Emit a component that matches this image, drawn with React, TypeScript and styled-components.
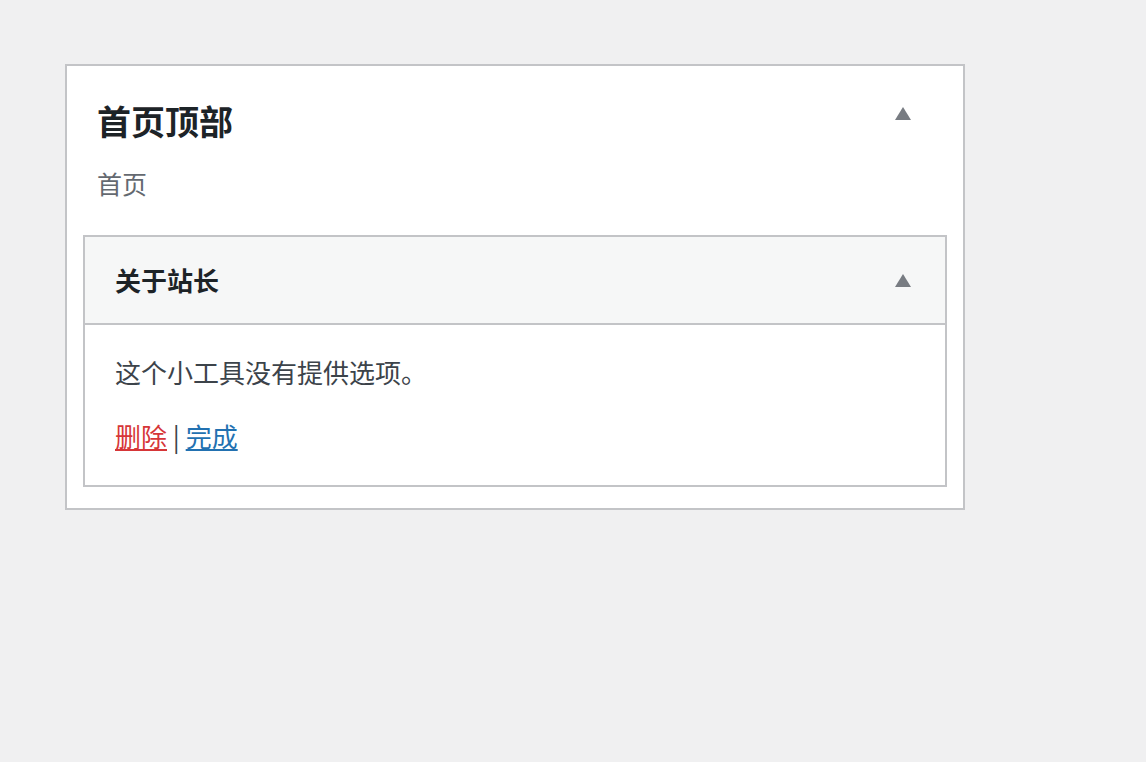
import React, { FC } from 'react';
import styled, { createGlobalStyle } from 'styled-components';

const GlobalStyle = createGlobalStyle`
  body {
    margin: 0;
    background: #f0f0f1;
    font-family: "Noto Sans CJK SC", "Noto Sans", sans-serif;
    color: #3c434a;
  }
`;

const Sidebar = styled.section`
  box-sizing: border-box;
  width: 900px;
  margin: 64px 0 0 65px;
  padding: 0 16px 21px;
  background: #fff;
  border: 2px solid #c3c4c7;
`;

const SidebarHeader = styled.div`
  display: flex;
  justify-content: space-between;
  align-items: flex-start;
  padding: 38px 36px 39px 14px;
`;

const SidebarTitle = styled.h2`
  margin: 0;
  font-size: 34px;
  line-height: 34px;
  font-weight: 700;
  color: #1d2327;
`;

const SidebarDescription = styled.p`
  margin: 33px 0 0;
  font-size: 25px;
  line-height: 25px;
  color: #646970;
`;

const Toggle = styled.button<{ $offset?: number }>`
  display: flex;
  align-items: center;
  justify-content: center;
  width: 16px;
  height: 14px;
  margin-top: ${({ $offset }) => $offset ?? 0}px;
  padding: 0;
  border: 0;
  background: none;
  color: #787c82;
  cursor: pointer;
`;

const Widget = styled.div`
  border: 2px solid #c3c4c7;
  background: #fff;
`;

const WidgetTop = styled.div`
  display: flex;
  align-items: center;
  justify-content: space-between;
  height: 86px;
  padding: 0 34px 0 30px;
  background: #f6f7f7;
  border-bottom: 2px solid #c3c4c7;
`;

const WidgetTitle = styled.h3`
  margin: 0;
  font-size: 26px;
  line-height: 26px;
  font-weight: 700;
  color: #1d2327;
`;

const WidgetInside = styled.div`
  padding: 34px 30px 36px;
  font-size: 26px;
  line-height: 26px;
`;

const Notice = styled.p`
  margin: 0 0 38px;
`;

const Actions = styled.div`
  color: #3c434a;
`;

const ActionLink = styled.a<{ $danger?: boolean }>`
  color: ${({ $danger }) => ($danger ? '#d63638' : '#2271b1')};
  text-decoration: underline;
  cursor: pointer;
`;

const Arrow: FC = () => (
  <svg width="16" height="13" viewBox="0 0 16 13" aria-hidden="true">
    <polygon points="8,0 16,13 0,13" fill="currentColor" />
  </svg>
);

const App: FC = () => (
  <>
    <GlobalStyle />
    <Sidebar>
      <SidebarHeader>
        <div>
          <SidebarTitle>首页顶部</SidebarTitle>
          <SidebarDescription>首页</SidebarDescription>
        </div>
        <Toggle $offset={2} aria-label="切换">
          <Arrow />
        </Toggle>
      </SidebarHeader>
      <Widget>
        <WidgetTop>
          <WidgetTitle>关于站长</WidgetTitle>
          <Toggle aria-label="切换">
            <Arrow />
          </Toggle>
        </WidgetTop>
        <WidgetInside>
          <Notice>这个小工具没有提供选项。</Notice>
          <Actions>
            <ActionLink $danger>删除</ActionLink> | <ActionLink>完成</ActionLink>
          </Actions>
        </WidgetInside>
      </Widget>
    </Sidebar>
  </>
);

export default App;
